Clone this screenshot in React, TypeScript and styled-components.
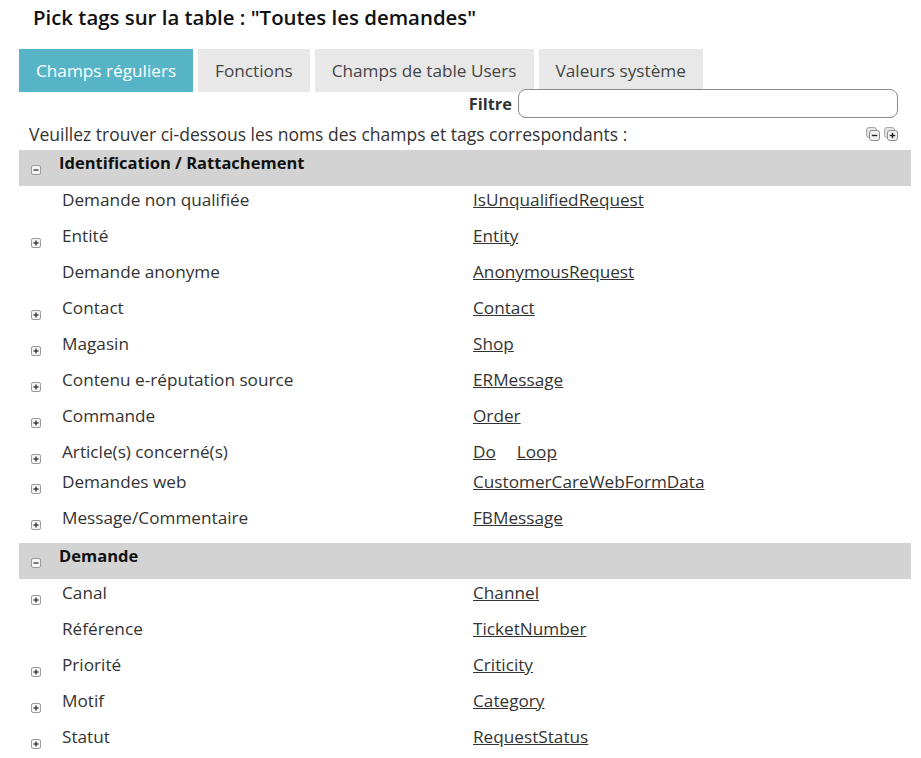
import React from "react";
import styled, { createGlobalStyle } from "styled-components";

const GlobalStyle = createGlobalStyle`
  html, body {
    margin: 0;
    padding: 0;
    background: #ffffff;
  }
  body {
    font-family: "Open Sans", "Liberation Sans", sans-serif;
    color: #333333;
  }
`;

type Field = { label: string; tags: string[]; expandable?: boolean; compact?: boolean };
type Section = { title: string; fields: Field[] };

const sections: Section[] = [
  {
    title: "Identification / Rattachement",
    fields: [
      { label: "Demande non qualifiée", tags: ["IsUnqualifiedRequest"] },
      { label: "Entité", tags: ["Entity"], expandable: true },
      { label: "Demande anonyme", tags: ["AnonymousRequest"] },
      { label: "Contact", tags: ["Contact"], expandable: true },
      { label: "Magasin", tags: ["Shop"], expandable: true },
      { label: "Contenu e-réputation source", tags: ["ERMessage"], expandable: true },
      { label: "Commande", tags: ["Order"], expandable: true },
      { label: "Article(s) concerné(s)", tags: ["Do", "Loop"], expandable: true, compact: true },
      { label: "Demandes web", tags: ["CustomerCareWebFormData"], expandable: true },
      { label: "Message/Commentaire", tags: ["FBMessage"], expandable: true },
    ],
  },
  {
    title: "Demande",
    fields: [
      { label: "Canal", tags: ["Channel"], expandable: true },
      { label: "Référence", tags: ["TicketNumber"] },
      { label: "Priorité", tags: ["Criticity"], expandable: true },
      { label: "Motif", tags: ["Category"], expandable: true },
      { label: "Statut", tags: ["RequestStatus"], expandable: true },
    ],
  },
];

const tabs = ["Champs réguliers", "Fonctions", "Champs de table Users", "Valeurs système"];

const ToggleBox: React.FC<{ open?: boolean }> = ({ open }) => (
  <svg width="10" height="10" viewBox="0 0 10 10">
    <rect x="0.5" y="0.5" width="9" height="9" rx="1.5" fill="#f4f4f4" stroke="#9a9a9a" />
    <line x1="2.5" y1="5" x2="7.5" y2="5" stroke="#222" strokeWidth="1.2" />
    {!open && <line x1="5" y1="2.5" x2="5" y2="7.5" stroke="#222" strokeWidth="1.2" />}
  </svg>
);

const StackedToggle: React.FC<{ open?: boolean }> = ({ open }) => (
  <svg width="14" height="14" viewBox="0 0 14 14">
    <rect x="0.5" y="0.5" width="10" height="10" rx="2.5" fill="#e4e4e4" stroke="#a8a8a8" />
    <rect x="3.5" y="3.5" width="10" height="10" rx="2.5" fill="#f2f2f2" stroke="#8e8e8e" />
    <line x1="5.8" y1="8.5" x2="11.2" y2="8.5" stroke="#222" strokeWidth="1.4" />
    {!open && <line x1="8.5" y1="5.8" x2="8.5" y2="11.2" stroke="#222" strokeWidth="1.4" />}
  </svg>
);

export default function App() {
  return (
    <Page>
      <GlobalStyle />
      <Title>Pick tags sur la table : "Toutes les demandes"</Title>
      <TabBar>
        {tabs.map((t, i) => (
          <Tab key={t} active={i === 0}>
            {t}
          </Tab>
        ))}
      </TabBar>
      <FilterRow>
        <FilterLabel>Filtre</FilterLabel>
        <FilterInput />
      </FilterRow>
      <InfoRow>
        <span>Veuillez trouver ci-dessous les noms des champs et tags correspondants :</span>
        <InfoIcons>
          <StackedToggle open />
          <StackedToggle />
        </InfoIcons>
      </InfoRow>
      {sections.map((s) => (
        <SectionBlock key={s.title}>
          <SectionHeader>
            <IconCell>
              <ToggleBox open />
            </IconCell>
            <SectionTitle>{s.title}</SectionTitle>
          </SectionHeader>
          {s.fields.map((f) => (
            <FieldRow key={f.label} compact={f.compact}>
              <IconCell>{f.expandable && <ToggleBox />}</IconCell>
              <FieldLabel>{f.label}</FieldLabel>
              <TagCell>
                {f.tags.map((tag) => (
                  <TagLink key={tag} href="#">
                    {tag}
                  </TagLink>
                ))}
              </TagCell>
            </FieldRow>
          ))}
        </SectionBlock>
      ))}
    </Page>
  );
}

const Page = styled.div`
  width: 921px;
  padding: 4px 10px 0 19px;
  box-sizing: border-box;
`;

const Title = styled.h1`
  margin: 0 0 0 14px;
  font-size: 20.4px;
  font-weight: 600;
  line-height: 26px;
  color: #111;
`;

const TabBar = styled.div`
  display: flex;
  gap: 5px;
  margin-top: 19px;
`;

const Tab = styled.div<{ active?: boolean }>`
  height: 43px;
  padding: 0 17px;
  display: flex;
  align-items: center;
  font-size: 17.2px;
  background: ${(p) => (p.active ? "#56b4c6" : "#e8e8e8")};
  color: ${(p) => (p.active ? "#ffffff" : "#444444")};
`;

const FilterRow = styled.div`
  display: flex;
  align-items: center;
  justify-content: flex-end;
  gap: 6px;
  margin-top: -3px;
  padding-right: 13px;
`;

const FilterLabel = styled.span`
  font-weight: 700;
  font-size: 16.4px;
  color: #333;
`;

const FilterInput = styled.input`
  width: 380px;
  height: 29px;
  box-sizing: border-box;
  border: 1px solid #8a8a8a;
  border-radius: 8px;
  outline: none;
`;

const InfoRow = styled.div`
  display: flex;
  align-items: center;
  justify-content: space-between;
  padding: 0 13px 0 10px;
  font-size: 17.5px;
  height: 32px;
  box-sizing: border-box;
`;

const InfoIcons = styled.div`
  display: flex;
  gap: 4px;
`;

const SectionBlock = styled.div`
  margin-bottom: 3px;
`;

const SectionHeader = styled.div`
  display: flex;
  align-items: flex-start;
  height: 36px;
  padding-top: 1px;
  box-sizing: border-box;
  background: #d3d3d3;
`;

const IconCell = styled.div`
  width: 40px;
  flex: none;
  padding: 14px 0 0 12px;
  box-sizing: border-box;
  display: flex;
`;

const SectionTitle = styled.span`
  font-weight: 700;
  font-size: 16.5px;
  line-height: 24px;
  color: #111;
`;

const FieldRow = styled.div<{ compact?: boolean }>`
  display: flex;
  align-items: flex-start;
  height: ${(p) => (p.compact ? 30 : 36)}px;
  padding-top: 2px;
  box-sizing: border-box;
  font-size: 17.2px;
  line-height: 24px;
`;

const FieldLabel = styled.span`
  width: 414px;
  flex: none;
  padding-left: 3px;
  box-sizing: border-box;
`;

const TagCell = styled.span`
  display: flex;
  gap: 21px;
`;

const TagLink = styled.a`
  color: #333;
  text-decoration: underline;
`;
